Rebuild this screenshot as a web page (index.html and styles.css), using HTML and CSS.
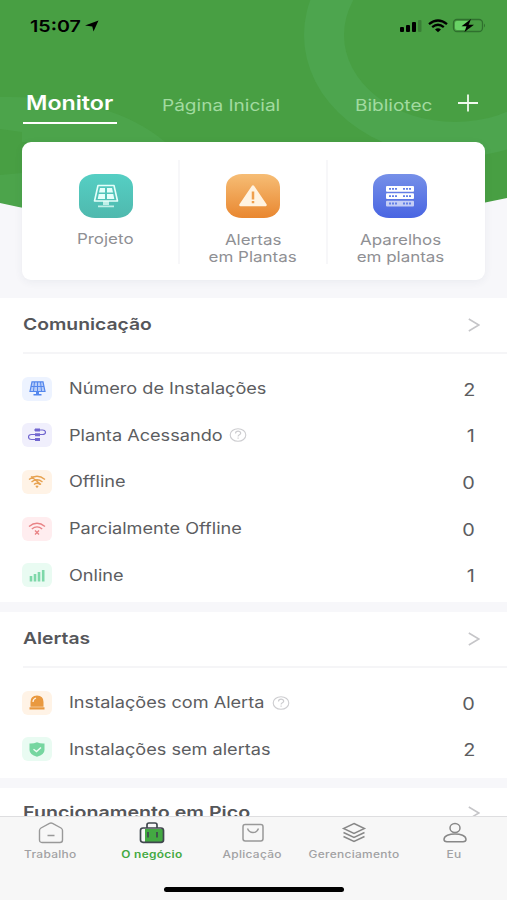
FILE: index.html
```html
<!DOCTYPE html>
<html lang="pt">
<head>
<meta charset="utf-8">
<title>Monitor</title>
<link rel="stylesheet" href="styles.css">
</head>
<body>
<svg width="0" height="0" class="defs">
  <symbol id="panel" viewBox="0 0 26 24"><path d="M5 1.5h16l3.5 15.5h-23z" fill="none" stroke="currentColor" stroke-width="1.6" stroke-linejoin="round"/><path d="M7 4h5v4.500H6zM14 4h5l1 4.500h-6zM5.700 10H12v5H4.700zM14 10h6.300l1 5H14z" fill="currentColor"/><path d="M10 17h6v4h-6zM5 21.500h16v1.800H5z" fill="currentColor" opacity=".75"/></symbol>
  <symbol id="panel-small" viewBox="0 0 17 15"><path d="M3 .8h11l2 9.700H1z" fill="currentColor" fill-opacity=".35" stroke="currentColor" stroke-width="1.200"/><path d="M8.500 1v12M2 5.500h13M5.500 1l-1 9M11.500 1l1 9" stroke="currentColor" stroke-width="1"/><path d="M7 10.500h3v2.500h2.500v1.500h-8V13H7z" fill="currentColor"/></symbol>
  <symbol id="help" viewBox="0 0 18 14"><ellipse cx="9" cy="7" rx="7.800" ry="6.300" fill="none" stroke="currentColor" stroke-width="1.100"/><path d="M6.500 5.500c0-3 5.200-3 5.200-.3 0 1.600-2.600 1.500-2.600 3.200M9.100 9.500v1.200" fill="none" stroke="currentColor" stroke-width="1.200"/></symbol>
  <symbol id="chev" viewBox="0 0 12 14"><path d="M.8 1l10 6-10 6" fill="none" stroke="currentColor" stroke-width="1.500"/></symbol>
</svg>
<div class="screen">
  <header class="hero">
    <svg class="hero-bg" viewBox="0 0 507 210" preserveAspectRatio="none">
      <path d="M0 0H507V210H0Z" fill="#489f43"/>
      <g fill="none" stroke="#4da54e"><ellipse cx="455" cy="32" rx="131" ry="90" stroke-width="0"/></g>
      <path fill-rule="evenodd" d="M304 35a151 122 0 1 0 302 0a151 122 0 1 0-302 0zM344 35a111 87 0 1 0 222 0a111 87 0 1 0-222 0z" fill="#4da54e"/>
      <path d="M0 97Q110 95 165 142H22V132L0 129ZM0 175L22 173V210H0Z" fill="#4da54e" opacity=".8"/>
      <path d="M0 203Q100 226 253 226Q380 226 507 198V230H0Z" fill="#f7f7fa"/>
    </svg>
    <div class="status">
      <span class="t time">15:07</span>
      <svg class="loc" width="14" height="12" viewBox="0 0 14 12"><path d="M13.500.5L8.500 11.500 7.300 6.500 0 5.500z"/></svg>
      <svg class="sys" width="90" height="16" viewBox="0 0 90 16">
        <g><rect x="1" y="10" width="4" height="5" rx="1"/><rect x="7" y="8" width="4" height="7" rx="1"/><rect x="13" y="5" width="4" height="10" rx="1"/><rect x="19" y="3" width="3.500" height="12" rx="1" opacity=".2"/></g>
        <g fill="none" stroke="#000" stroke-width="2.300"><path d="M30 7.200q9-7.400 18 0"/><path d="M33.200 10.200q5.800-4.800 11.600 0"/></g><path d="M36 12.500q3-2.400 6 0l-3 2.700z"/>
        <rect x="54.500" y="2.500" width="29" height="12" rx="3.500" fill="none" stroke="#2f702e" stroke-width="1.300"/><rect x="56" y="4" width="14" height="9" rx="2" fill="#69d266"/><path d="M85 6.500q2 2 0 4z" fill="#2f702e"/><path d="M72 2L62.500 9.300h5L65.500 15l9.500-7.300h-5.300z"/>
      </svg>
    </div>
    <nav class="tabs">
      <a class="tab active"><span class="t">Monitor</span></a>
      <a class="tab second"><span class="t">Página Inicial</span></a>
      <a class="tab third"><span class="t">Bibliotec</span></a>
      <svg class="plus" width="22" height="18" viewBox="0 0 22 18"><path d="M1 9h20M11 .5v17" stroke="#f0faee" stroke-width="1.800"/></svg>
    </nav>
    <div class="card">
      <div class="item"><div class="tile teal"><svg width="26" height="24"><use href="#panel"/></svg></div><span class="t">Projeto</span></div>
      <div class="item two"><div class="tile orange"><svg width="28" height="22" viewBox="0 0 28 22"><path d="M14 1.500L26.500 20h-25z" fill="#fff3e2" stroke="#fff3e2" stroke-width="2.500" stroke-linejoin="round"/><path d="M14 6.500v8M14 16v2.300" stroke="#ef9f4d" stroke-width="2.500"/></svg></div><span class="t">Alertas</span><span class="t">em Plantas</span></div>
      <div class="item two last"><div class="tile blue"><svg width="28" height="22" viewBox="0 0 28 22"><g fill="#fff"><rect y="1" width="28" height="5.700" rx="1"/><rect y="8.300" width="28" height="5.700" rx="1"/><rect y="15.700" width="28" height="5.700" rx="1" opacity=".65"/></g><path d="M3 3.900h8M17 3.900h8M3 11.200h8M17 11.200h8M3 18.500h8M17 18.500h8" stroke="#6380e6" stroke-width="1.800" stroke-dasharray="2 1"/></svg></div><span class="t">Aparelhos</span><span class="t">em plantas</span></div>
    </div>
  </header>
  <main class="content">
    <section class="section com">
      <h2><span class="t">Comunicação</span><svg class="chev" width="12" height="14"><use href="#chev"/></svg></h2>
      <div class="row"><i class="ic b1"><svg width="17" height="15"><use href="#panel-small"/></svg></i><span class="t">Número de Instalações</span><b class="t">2</b></div>
      <div class="row"><i class="ic b2"><svg width="18" height="14" viewBox="0 0 18 14"><path d="M6 2h8.500c4 0 4 4.500 0 4.500H3.500c-4 0-4 5 0 5H12" fill="none" stroke="currentColor" stroke-width="1.200"/><path d="M7 .5h5v3H7zM7 5.200h5v3H7zM7 10h5v3H7z" fill="currentColor"/></svg></i><span class="t r2">Planta Acessando</span><svg class="help" width="18" height="14"><use href="#help"/></svg><b class="t">1</b></div>
      <div class="row"><i class="ic b3"><svg width="18" height="14" viewBox="0 0 18 14"><g fill="none" stroke="currentColor" stroke-width="1.400"><path d="M1 4.500q8-6.500 16 0M3.500 7q5.500-4.500 11 0M6 9.500q3-2.500 6 0M3 1.500l10 8"/></g><path d="M7.300 11q1.700-1.200 3.400 0L9 13.300z" fill="currentColor"/></svg></i><span class="t">Offline</span><b class="t">0</b></div>
      <div class="row"><i class="ic b4"><svg width="18" height="14" viewBox="0 0 18 14"><g fill="none" stroke="currentColor" stroke-width="1.400"><path d="M1 4.500q8-6.500 16 0M3.800 7q5.200-4.200 10.400 0M7 8.500l4 4M11 8.500l-4 4"/></g></svg></i><span class="t">Parcialmente Offline</span><b class="t">0</b></div>
      <div class="row"><i class="ic b5"><svg width="16" height="13" viewBox="0 0 16 13"><path d="M2 7v5.500M6 5v7.500M10 3v9.500M14.200 1v11.500" stroke="currentColor" stroke-width="2.600"/></svg></i><span class="t">Online</span><b class="t">1</b></div>
    </section>
    <section class="section ale">
      <h2><span class="t">Alertas</span><svg class="chev" width="12" height="14"><use href="#chev"/></svg></h2>
      <div class="row"><i class="ic b6"><svg width="16" height="15" viewBox="0 0 16 15"><path d="M1.500 11.800V7q0-6.500 6.500-6.500T14.500 7v4.800zM.5 12.300h15v2.200H.5z" fill="currentColor"/><path d="M4 7q0-3 3-4" fill="none" stroke="#fff3e6" stroke-width="1.300"/></svg></i><span class="t r6">Instalações com Alerta</span><svg class="help" width="18" height="14"><use href="#help"/></svg><b class="t">0</b></div>
      <div class="row"><i class="ic b7"><svg width="16" height="15" viewBox="0 0 16 15"><path d="M8 .3q3.500 1.500 7.500 1.200V8q0 4.500-7.500 6.700Q.5 12.500.5 8V1.500Q4.500 1.800 8 .3z" fill="currentColor"/><path d="M4.500 7.200l3 2.300 4.500-4" fill="none" stroke="#effbf4" stroke-width="1.400"/></svg></i><span class="t">Instalações sem alertas</span><b class="t">2</b></div>
    </section>
    <section class="section fun"><h2><span class="t">Funcionamento em Pico</span><svg class="chev" width="12" height="14"><use href="#chev"/></svg></h2></section>
  </main>
  <footer class="bar">
    <div class="nav"><svg width="26" height="22" viewBox="0 0 26 22"><path d="M1.500 8.500Q1.500 7 3 6l8.500-4.700q1.500-.7 3 0L23 6q1.500 1 1.500 2.500V18q0 2.500-2.500 2.500H4Q1.500 20.500 1.500 18zM9.500 13.500h7" fill="none" stroke="#999" stroke-width="1.400"/></svg><span class="t">Trabalho</span></div>
    <div class="nav on"><svg width="26" height="22" viewBox="0 0 26 22"><rect x="6" y="7" width="18" height="13" fill="#43a942"/><path d="M8 6V3q0-2 2-2h6q2 0 2 2v3M4 6h18q2.500 0 2.500 2.500V18q0 2.300-2.500 2.300H4Q1.500 20.300 1.500 18V8.500Q1.500 6 4 6zM9 10v5.500M18 10v5.500" fill="none" stroke="#40474e" stroke-width="1.700"/></svg><span class="t">O negócio</span></div>
    <div class="nav"><svg width="26" height="22" viewBox="0 0 26 22"><rect x="3" y="2.500" width="20" height="16.500" rx="2.200" fill="none" stroke="#999" stroke-width="1.500"/><path d="M7.500 6.500q1.500 4 5.500 4t5.500-4" fill="none" stroke="#999" stroke-width="1.400"/></svg><span class="t">Aplicação</span></div>
    <div class="nav"><svg width="26" height="22" viewBox="0 0 26 22"><path d="M13 1.500l10.500 5L13 11.500l-10.500-5zM2.500 10.500l10.500 5 10.500-5M2.500 14.500l10.500 5 10.500-5" fill="none" stroke="#888" stroke-width="1.400"/></svg><span class="t">Gerenciamento</span></div>
    <div class="nav"><svg width="26" height="22" viewBox="0 0 26 22"><g fill="none" stroke="#888" stroke-width="1.500"><ellipse cx="13" cy="6" rx="5" ry="4.500"/><path d="M2 17.500C2 10 24 10 24 17.500q0 2.200-3 2.200H5q-3 0-3-2.200z"/></g></svg><span class="t">Eu</span></div>
    <div class="home"></div>
  </footer>
</div>
</body>
</html>
```
FILE: styles.css
```css
* { box-sizing: border-box; }
body { margin: 0; font-family: Inter, "Liberation Sans", sans-serif; color: #5c5d61; }
.defs { position: absolute; }
.screen { width: 507px; height: 900px; overflow: hidden; display: flex; flex-direction: column; background: #f7f7fa; }
.t { display: inline-block; white-space: nowrap; transform: scaleX(1.17); transform-origin: left center; }
.hero { position: relative; height: 298px; flex: none; }
.hero-bg { position: absolute; left: 0; top: 0; width: 507px; height: 210px; }
.status { position: relative; display: flex; height: 50px; padding: 16px 18px 0 30px; }
.time { width: 55px; font-size: 16.500px; line-height: 20px; font-weight: 600; color: #000; transform: scaleX(1.19); }
.loc { margin-top: 4px; }
.sys { margin: 1px 0 0 auto; }
.tabs { position: relative; display: flex; height: 92px; padding: 40px 0 0 23px; }
.tab { height: 34px; font-size: 16px; line-height: 31px; color: #a2dba0; }
.tab .t { transform: scaleX(1.19); }
.active { width: 94px; padding-left: 3px; font-size: 19.500px; line-height: 27px; font-weight: 600; color: #fff; border-bottom: 2px solid #fff; }
.second { margin-left: 45px; width: 193px; }
.third { width: 102px; }
.plus { margin-top: 4px; }
.card { position: relative; width: 463px; height: 138px; margin-left: 22px; border-radius: 9px; background: #fff; display: flex; box-shadow: 0 2px 8px #30406010; padding: 18px 10px 16px 11px; }
.item { flex: 1; display: flex; flex-direction: column; align-items: center; padding-top: 14px; font-size: 14.500px; line-height: 17px; color: #8f9094; }
.item + .item { border-left: 2px solid #f7f7f9; }
.last { padding-right: 2px; }
.item .t { transform-origin: center; }
.tile { flex: none; width: 54px; height: 44px; margin-bottom: 12px; border-radius: 16px / 13px; display: flex; align-items: center; justify-content: center; color: #e5fffa; }
.teal { background: linear-gradient(#55cfc4, #4fb9ae); }
.orange { background: linear-gradient(#f6bd75, #e98730); }
.blue { background: linear-gradient(#7690e8, #4965e2); }
.two .tile { margin-bottom: 13px; }
.content { flex: none; height: 518px; overflow: hidden; }
.section { background: #fff; margin-bottom: 10px; }
.com { height: 304px; }
.ale { height: 166px; }
.fun { height: 60px; }
h2 { display: flex; align-items: center; height: 56px; margin: 0 0 12px 23px; padding: 0 27px 2px 0; border-bottom: 2px solid #f5f5f7; font-size: 16.500px; font-weight: 600; color: #55565a; }
.fun h2 { padding-bottom: 6px; }
.fun .t { transform: scaleX(1.19); }
.chev { margin-left: auto; color: #c5c5c8; position: relative; top: 1px; }
.row { display: flex; align-items: center; height: 46.600px; padding: 0 32px 1px 22px; font-size: 15.500px; }
.ic { width: 30px; height: 24px; border-radius: 6px; margin-right: 17px; display: flex; align-items: center; justify-content: center; flex: none; }
.row b { margin-left: auto; font-size: 17px; font-weight: 400; transform-origin: right center; position: relative; top: 1px; }
.r2 { width: 160px; }
.r6 { width: 203px; }
.help { color: #cdcdd0; }
.b1 { background: #edf3ff; color: #5487ed; }
.b2 { background: #f0effc; color: #7166cf; }
.b3 { background: #fff3e6; color: #e7a250; }
.b4 { background: #ffedef; color: #e98386; }
.b5 { background: #e9fbf2; color: #7ed8a9; }
.b6 { background: #fff3e6; color: #e9993f; }
.b7 { background: #e9fbf2; color: #76d6a0; }
.bar { position: relative; height: 84px; flex: none; border-top: 1px solid #dedee0; background: #f7f7f7; display: flex; padding: 5px 0 0; }
.nav { width: 101px; flex: none; display: flex; flex-direction: column; align-items: center; font-size: 9.700px; line-height: 12px; font-weight: 500; letter-spacing: .25px; color: #a1a1a3; }
.nav .t { margin-top: 5px; transform: scaleX(1.23); transform-origin: center; }
.on { color: #43a942; font-weight: 600; }
.home { position: absolute; left: 164px; top: 70px; width: 180px; height: 5px; border-radius: 3px; background: #000; }
```
